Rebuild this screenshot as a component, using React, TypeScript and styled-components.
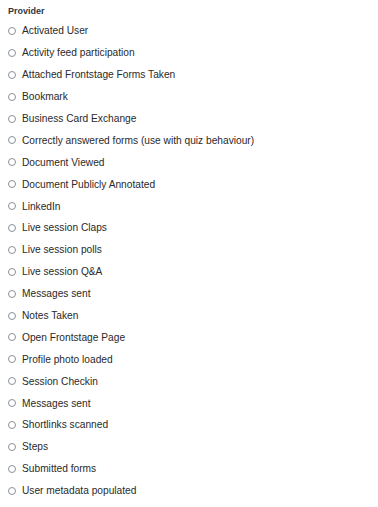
import styled, { createGlobalStyle } from 'styled-components'

const GlobalStyle = createGlobalStyle`
  body {
    margin: 0;
    background: #ffffff;
    font-family: "Liberation Sans", Arial, sans-serif;
    color: #1f2328;
  }
`

const Panel = styled.div`
  padding: 6px 8px 8px 8px;
`

const Heading = styled.div`
  font-size: 9px;
  font-weight: 700;
  color: #33373d;
  line-height: 11px;
  margin-bottom: 3px;
`

const List = styled.div`
  display: flex;
  flex-direction: column;
`

const Row = styled.label`
  display: flex;
  align-items: center;
  gap: 6px;
  height: 21.9px;
  font-size: 10.2px;
  color: #2a2a2a;
  cursor: pointer;
`

const Radio = styled.span`
  box-sizing: border-box;
  width: 8px;
  height: 8px;
  border: 1.2px solid #8a9099;
  border-radius: 50%;
  flex-shrink: 0;
`

const providers = [
  'Activated User',
  'Activity feed participation',
  'Attached Frontstage Forms Taken',
  'Bookmark',
  'Business Card Exchange',
  'Correctly answered forms (use with quiz behaviour)',
  'Document Viewed',
  'Document Publicly Annotated',
  'LinkedIn',
  'Live session Claps',
  'Live session polls',
  'Live session Q&A',
  'Messages sent',
  'Notes Taken',
  'Open Frontstage Page',
  'Profile photo loaded',
  'Session Checkin',
  'Messages sent',
  'Shortlinks scanned',
  'Steps',
  'Submitted forms',
  'User metadata populated',
]

export default function App() {
  return (
    <>
      <GlobalStyle />
      <Panel>
        <Heading>Provider</Heading>
        <List>
          {providers.map((p, i) => (
            <Row key={i}>
              <Radio />
              {p}
            </Row>
          ))}
        </List>
      </Panel>
    </>
  )
}
